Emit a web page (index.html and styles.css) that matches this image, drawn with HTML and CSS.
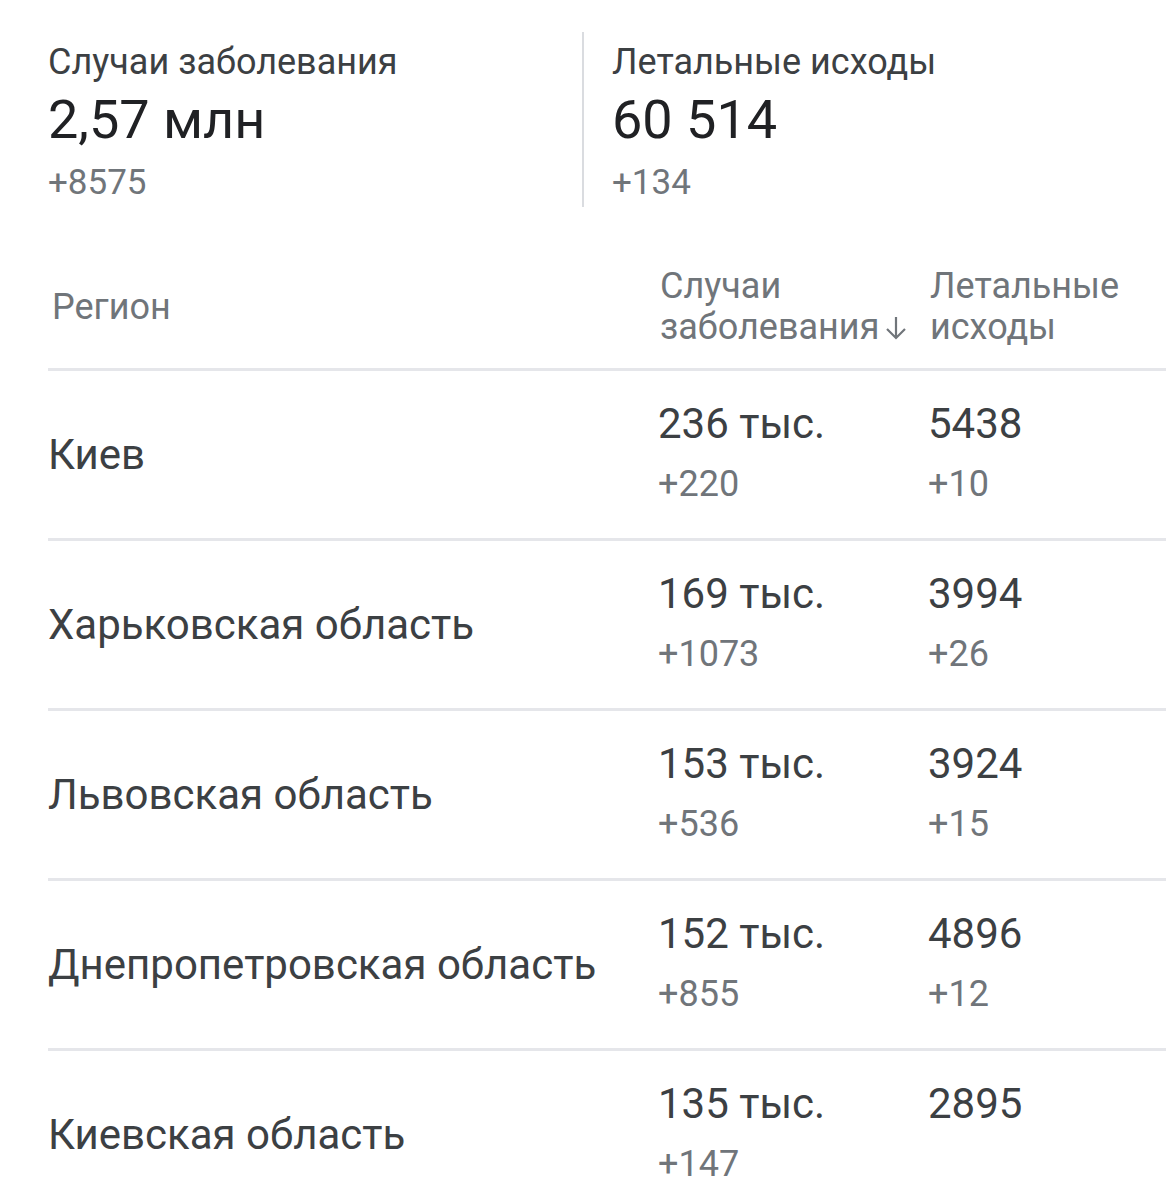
FILE: index.html
```html
<!DOCTYPE html>
<html lang="ru">
<head>
<meta charset="utf-8">
<link rel="stylesheet" href="styles.css">
</head>
<body>
<div class="summary">
  <div class="stat">
    <div class="stat-label">Случаи заболевания</div>
    <div class="stat-value">2,57 млн</div>
    <div class="stat-delta">+8575</div>
  </div>
  <div class="stat stat-second">
    <div class="stat-label">Летальные исходы</div>
    <div class="stat-value">60 514</div>
    <div class="stat-delta">+134</div>
  </div>
</div>
<div class="table">
  <div class="head">
    <div class="h-region">Регион</div>
    <div class="h-col">Случаи<br>заболевания<svg class="arrow" viewBox="0 0 22 24" width="22" height="24"><path d="M11 1V22M2 13L11 22L20 13" fill="none" stroke="#70757a" stroke-width="2.2"/></svg></div>
    <div class="h-col">Летальные<br>исходы</div>
  </div>
  <div class="row">
    <div class="region">Киев</div>
    <div class="cell"><div class="val">236 тыс.</div><div class="delta">+220</div></div>
    <div class="cell"><div class="val">5438</div><div class="delta">+10</div></div>
  </div>
  <div class="row">
    <div class="region">Харьковская область</div>
    <div class="cell"><div class="val">169 тыс.</div><div class="delta">+1073</div></div>
    <div class="cell"><div class="val">3994</div><div class="delta">+26</div></div>
  </div>
  <div class="row">
    <div class="region">Львовская область</div>
    <div class="cell"><div class="val">153 тыс.</div><div class="delta">+536</div></div>
    <div class="cell"><div class="val">3924</div><div class="delta">+15</div></div>
  </div>
  <div class="row">
    <div class="region">Днепропетровская область</div>
    <div class="cell"><div class="val">152 тыс.</div><div class="delta">+855</div></div>
    <div class="cell"><div class="val">4896</div><div class="delta">+12</div></div>
  </div>
  <div class="row">
    <div class="region">Киевская область</div>
    <div class="cell"><div class="val">135 тыс.</div><div class="delta">+147</div></div>
    <div class="cell"><div class="val">2895</div><div class="delta"></div></div>
  </div>
</div>
</body>
</html>
```

FILE: styles.css
```css
* {
  box-sizing: border-box;
}

html, body {
  margin: 0;
  padding: 0;
  background: #ffffff;
  font-family: Roboto, "Noto Sans", Arial, sans-serif;
}

.summary {
  display: flex;
  padding: 32px 0 0 48px;
}

.stat {
  width: 534px;
  height: 175px;
  padding-top: 9px;
}

.stat-second {
  border-left: 2px solid #dadce0;
  padding-left: 28px;
  width: auto;
}

.stat-label {
  font-size: 36px;
  line-height: 42px;
  color: #3c4043;
}

.stat-value {
  font-size: 54px;
  line-height: 74px;
  color: #202124;
}

.stat-delta {
  font-size: 35px;
  line-height: 52px;
  color: #70757a;
}

.table {
  margin-top: 30px;
  padding-left: 48px;
}

.head,
.row {
  display: grid;
  grid-template-columns: 610px 270px 1fr;
  border-bottom: 3px solid #e5e6ea;
}

.head {
  height: 134px;
  padding-top: 8px;
  align-items: center;
}

.h-region {
  font-size: 36px;
  color: #70757a;
  padding-left: 4px;
}

.h-col {
  font-size: 36px;
  line-height: 41px;
  color: #70757a;
  padding-left: 2px;
  white-space: nowrap;
}

.arrow {
  display: inline-block;
  margin-left: 6px;
  vertical-align: -1px;
}

.row {
  height: 170px;
}

.region {
  align-self: center;
  font-size: 42px;
  color: #3c4043;
}

.cell {
  padding-top: 29px;
}

.val {
  font-size: 42px;
  line-height: 48px;
  color: #3c4043;
}

.delta {
  font-size: 36px;
  line-height: 72px;
  color: #70757a;
}
```
